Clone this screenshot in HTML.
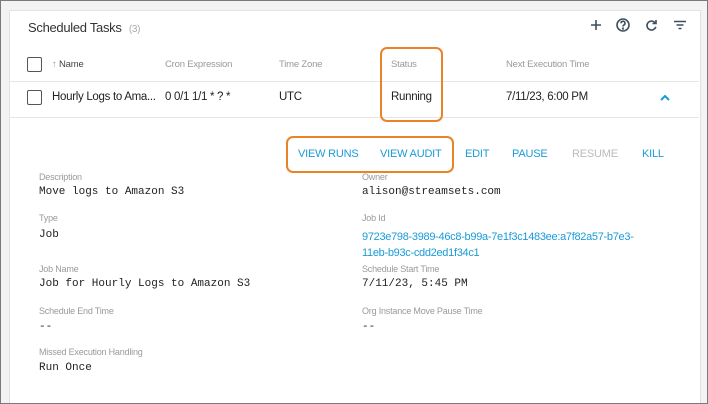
<!DOCTYPE html>
<html><head><style>
body{margin:0;width:708px;height:404px;overflow:hidden;background:#fff;font-family:"Liberation Sans",sans-serif;position:relative}
.frame{position:absolute;left:0;top:0;width:706px;height:402px;border:1px solid #7a7a7a;background:#f3f3f3;overflow:hidden}
.card{position:absolute;left:8px;top:9px;width:690px;height:400px;background:#fff;border:1px solid #e2e2e2}
.t{position:absolute;white-space:nowrap}
.lbl{font-size:9px;color:#9a9a9a;letter-spacing:-0.2px}
.val{font-family:"Liberation Mono",monospace;font-size:11px;color:#222}
.hd{font-size:9.5px;color:#999;letter-spacing:-0.2px}
.cell{font-size:11.5px;color:#222;letter-spacing:-0.3px}
.btn{font-size:11px;color:#1a9bd7;letter-spacing:-0.2px}
.cb{position:absolute;width:13px;height:13px;border:1.5px solid #555;border-radius:2px}
.hl{position:absolute;left:9px;width:690px;height:1px;background:#e6e6e6}
.box{position:absolute;border:2px solid #e8832a;border-radius:7px}
</style></head><body>
<div class="frame"><div class="card"></div></div>
<div class="t" style="left:28px;top:20px;font-size:13px;color:#333;letter-spacing:-0.3px">Scheduled Tasks <span style="font-size:10px;color:#aaa;margin-left:4px">(3)</span></div>
<svg style="position:absolute;left:588px;top:15px" width="104" height="20" viewBox="0 0 104 20" fill="none" stroke="#3e4f60" stroke-width="1.6">
<path d="M8 5v10M3 10h10"/>
<circle cx="35" cy="10" r="6"/><path d="M33 8.3a2 2 0 1 1 2.8 1.8c-.6.4-.8.8-.8 1.4" /><circle cx="35" cy="13.6" r=".4" fill="#3e4f60"/>
<path d="M67.5 8.5a4.5 4.5 0 1 0 .3 3.3"/><path d="M68 5v3.5h-3.5" />
<path d="M86 6.5h12M88.5 10h7M90.5 13.5h3"/>
</svg>
<div class="cb" style="left:27px;top:57px"></div>
<div class="t hd" style="left:52px;top:59px;color:#444"><span style="color:#999">↑</span> Name</div>
<div class="t hd" style="left:165px;top:59px">Cron Expression</div>
<div class="t hd" style="left:279px;top:59px">Time Zone</div>
<div class="t hd" style="left:391px;top:59px">Status</div>
<div class="t hd" style="left:506px;top:59px">Next Execution Time</div>
<div class="hl" style="top:81px"></div>
<div class="cb" style="left:27px;top:90px"></div>
<div class="t cell" style="left:52px;top:91px">Hourly Logs to Ama...</div>
<div class="t cell" style="left:165px;top:91px">0 0/1 1/1 * ? *</div>
<div class="t cell" style="left:279px;top:91px">UTC</div>
<div class="t cell" style="left:391px;top:91px">Running</div>
<div class="t cell" style="left:506px;top:91px">7/11/23, 6:00 PM</div>
<svg style="position:absolute;left:659px;top:94px" width="12" height="8"><path d="M2 6l4-4 4 4" stroke="#1a9bd7" stroke-width="2" fill="none"/></svg>
<div class="hl" style="top:117px"></div>
<div class="box" style="left:380px;top:47px;width:59px;height:71px"></div>
<div class="t btn" style="left:298px;top:148px">VIEW RUNS</div>
<div class="t btn" style="left:380px;top:148px">VIEW AUDIT</div>
<div class="t btn" style="left:465px;top:148px">EDIT</div>
<div class="t btn" style="left:512px;top:148px">PAUSE</div>
<div class="t btn" style="left:572px;top:148px;color:#bbb">RESUME</div>
<div class="t btn" style="left:642px;top:148px">KILL</div>
<div class="box" style="left:286px;top:136px;width:164px;height:33px"></div>
<div class="t lbl" style="left:39px;top:172px">Description</div>
<div class="t val" style="left:39px;top:186px">Move logs to Amazon S3</div>
<div class="t lbl" style="left:362px;top:172px">Owner</div>
<div class="t val" style="left:362px;top:186px">alison@streamsets.com</div>
<div class="t lbl" style="left:39px;top:213px">Type</div>
<div class="t val" style="left:39px;top:229px">Job</div>
<div class="t lbl" style="left:362px;top:213px">Job Id</div>
<div class="t" style="left:362px;top:229px;font-size:11px;color:#1a9bd7;line-height:16px;letter-spacing:-0.3px">9723e798-3989-46c8-b99a-7e1f3c1483ee:a7f82a57-b7e3-<br>11eb-b93c-cdd2ed1f34c1</div>
<div class="t lbl" style="left:39px;top:264px">Job Name</div>
<div class="t val" style="left:39px;top:278px">Job for Hourly Logs to Amazon S3</div>
<div class="t lbl" style="left:362px;top:264px">Schedule Start Time</div>
<div class="t val" style="left:362px;top:278px">7/11/23, 5:45 PM</div>
<div class="t lbl" style="left:39px;top:306px">Schedule End Time</div>
<div class="t val" style="left:39px;top:321px">--</div>
<div class="t lbl" style="left:362px;top:306px">Org Instance Move Pause Time</div>
<div class="t val" style="left:362px;top:321px">--</div>
<div class="t lbl" style="left:39px;top:347px">Missed Execution Handling</div>
<div class="t val" style="left:39px;top:362px">Run Once</div>
</body></html>
